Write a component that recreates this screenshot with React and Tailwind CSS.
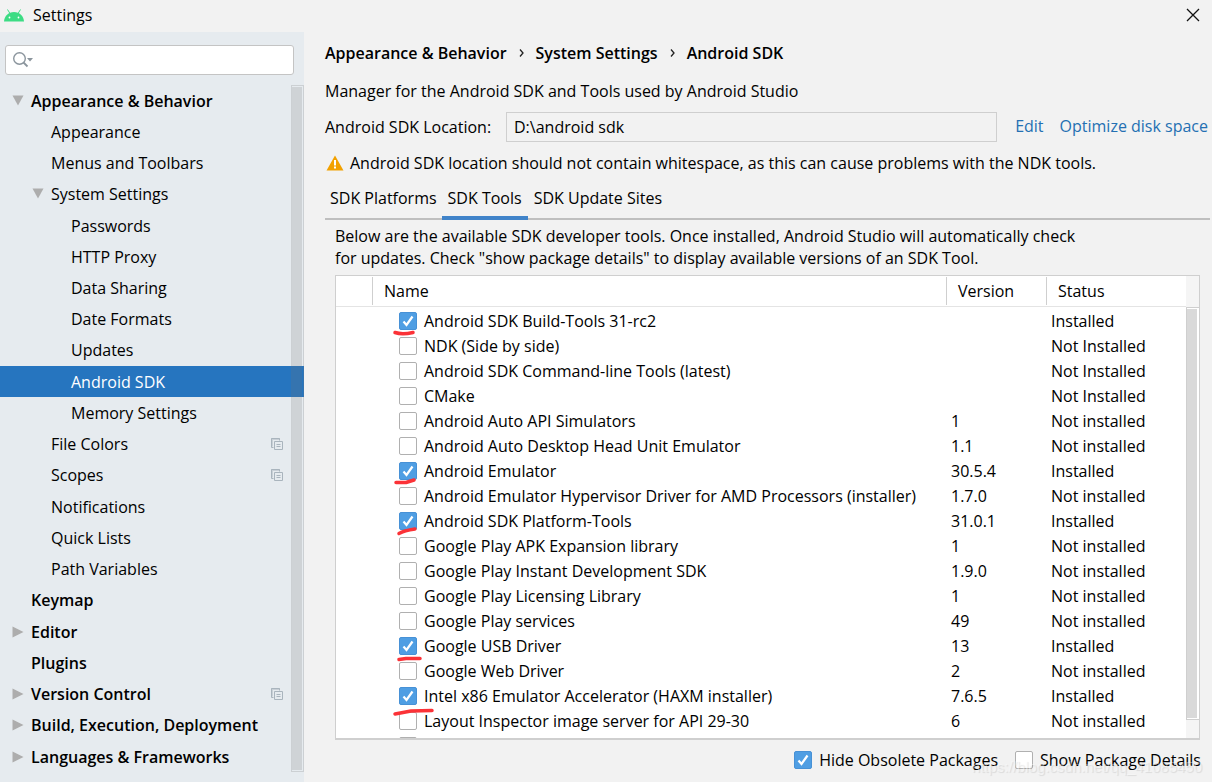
import React, { useState } from "react";

const menuItems = [
  { label: "Appearance & Behavior", level: 0, arrow: "down" },
  { label: "Appearance", level: 1 },
  { label: "Menus and Toolbars", level: 1 },
  { label: "System Settings", level: 1, arrow: "down" },
  { label: "Passwords", level: 2 },
  { label: "HTTP Proxy", level: 2 },
  { label: "Data Sharing", level: 2 },
  { label: "Date Formats", level: 2 },
  { label: "Updates", level: 2 },
  { label: "Android SDK", level: 2 },
  { label: "Memory Settings", level: 2 },
  { label: "File Colors", level: 1, project: true },
  { label: "Scopes", level: 1, project: true },
  { label: "Notifications", level: 1 },
  { label: "Quick Lists", level: 1 },
  { label: "Path Variables", level: 1 },
  { label: "Keymap", level: 0 },
  { label: "Editor", level: 0, arrow: "right" },
  { label: "Plugins", level: 0 },
  { label: "Version Control", level: 0, arrow: "right", project: true },
  { label: "Build, Execution, Deployment", level: 0, arrow: "right" },
  { label: "Languages & Frameworks", level: 0, arrow: "right" },
];

const tools = [
  { name: "Android SDK Build-Tools 31-rc2", version: "", status: "Installed" },
  { name: "NDK (Side by side)", version: "", status: "Not Installed" },
  { name: "Android SDK Command-line Tools (latest)", version: "", status: "Not Installed" },
  { name: "CMake", version: "", status: "Not Installed" },
  { name: "Android Auto API Simulators", version: "1", status: "Not installed" },
  { name: "Android Auto Desktop Head Unit Emulator", version: "1.1", status: "Not installed" },
  { name: "Android Emulator", version: "30.5.4", status: "Installed" },
  { name: "Android Emulator Hypervisor Driver for AMD Processors (installer)", version: "1.7.0", status: "Not installed" },
  { name: "Android SDK Platform-Tools", version: "31.0.1", status: "Installed" },
  { name: "Google Play APK Expansion library", version: "1", status: "Not installed" },
  { name: "Google Play Instant Development SDK", version: "1.9.0", status: "Not installed" },
  { name: "Google Play Licensing Library", version: "1", status: "Not installed" },
  { name: "Google Play services", version: "49", status: "Not installed" },
  { name: "Google USB Driver", version: "13", status: "Installed" },
  { name: "Google Web Driver", version: "2", status: "Not installed" },
  { name: "Intel x86 Emulator Accelerator (HAXM installer)", version: "7.6.5", status: "Installed" },
  { name: "Layout Inspector image server for API 29-30", version: "6", status: "Not installed" },
];

const indent = ["pl-3", "pl-8", "pl-[52px]"];

const AndroidIcon = () => (
  <svg className="w-5 h-[13px]" viewBox="0 0 20 13">
    <path d="M3.5 0.5L6 4.5M16.5 0.5L14 4.5" stroke="#3ddc84" strokeWidth="1" />
    <path d="M0 12.5C0.3 7 4.5 3 10 3s9.700 4 10 9.500z" fill="#3ddc84" />
    <circle cx="5.500" cy="8.500" r="0.900" fill="#fff" />
    <circle cx="14.500" cy="8.500" r="0.900" fill="#fff" />
  </svg>
);

const Arrow = ({ direction }) => (
  <svg className="w-3 h-3 shrink-0" viewBox="0 0 12 12" fill="#adadad">
    {direction === "down" && <path d="M0.500 0.500h11L6 10.500z" />}
    {direction === "right" && <path d="M0.500 0.500v11L11.500 6z" />}
  </svg>
);

const ProjectIcon = () => (
  <svg className="w-3 h-3 ml-auto mr-[9px] shrink-0" viewBox="0 0 12 12" fill="none" stroke="#a9b4bd">
    <path d="M2.500 9.500h-2v-9h8v2" />
    <path d="M0 1h9" />
    <path d="M1.500 1.500v7" stroke="#c9d1d7" />
    <path d="M3.500 3.500h8v8h-8z" fill="#e6ebef" />
    <path d="M5.500 6.500h4M5.500 8.500h4" />
  </svg>
);

const CheckBox = ({ label, checked, onChange }) => (
  <label className="inline-flex items-center gap-[7px]">
    <span className="relative flex w-[18px] h-[18px]">
      <input
        type="checkbox"
        checked={checked}
        onChange={onChange}
        className="appearance-none w-[18px] h-[18px] rounded-[2px] border border-[#b0b0b0] bg-white checked:bg-[#4f9ee3] checked:border-[#4791d6]"
      />
      {checked && (
        <svg className="absolute inset-0 pointer-events-none" viewBox="0 0 18 18" fill="none">
          <path d="M4.500 9.500l3 3.500L13.500 4.500" stroke="#fff" strokeWidth="2.200" />
        </svg>
      )}
    </span>
    <span>{label}</span>
  </label>
);

const RedMarks = () => (
  <svg
    className="absolute left-[53px] top-[50px] w-12 h-[400px] pointer-events-none"
    viewBox="0 0 48 400"
    fill="none"
    stroke="#fb3237"
    strokeWidth="3.500"
    strokeLinecap="round"
    strokeLinejoin="round"
  >
    <path d="M6 6.500Q13 9 24 6.500" />
    <path d="M7 156.500L17 156.500L25 154" />
    <path d="M10 207.500Q15 204.500 26 203" />
    <path d="M10 333.500L17 332.500L31 332.500" />
    <path d="M6 388L22 385L43 384.500" />
  </svg>
);

const Sidebar = () => {
  const [selected, setSelected] = useState("Android SDK");

  return (
    <aside className="w-[304px] shrink-0 flex flex-col bg-[#e6ebef] pt-[13px] pb-[10px]">
      <div className="relative ml-[5px] mr-[10px]">
        <svg className="absolute left-2 top-[7px]" width="21" height="16" viewBox="0 0 21 16" fill="none">
          <circle cx="6.500" cy="6.500" r="5.800" stroke="#8b959d" strokeWidth="1.400" />
          <path d="M10.500 10.500L14.500 14.500" stroke="#8b959d" strokeWidth="1.800" />
          <path d="M14 6h6l-3 3.500z" fill="#8b959d" />
        </svg>
        <input
          type="text"
          aria-label="Search settings"
          className="block w-full h-[30px] pl-9 rounded-[3px] border border-[#c4c4c4] bg-white outline-none"
        />
      </div>
      <nav className="relative flex-1 flex flex-col mt-[10px]">
        {menuItems.map((item) => (
          <button
            key={item.label}
            type="button"
            onClick={() => setSelected(item.label)}
            className={`flex-1 flex items-center gap-[7px] pr-3 text-left ${indent[item.level]} ${
              item.level === 0 ? "font-semibold" : ""
            } ${selected === item.label ? "bg-[#2675bf] text-white" : ""}`}
          >
            <Arrow direction={item.arrow} />
            <span className="whitespace-nowrap">{item.label}</span>
            {item.project && <ProjectIcon />}
          </button>
        ))}
        <div className="absolute right-0 inset-y-0 w-[13px] border border-[#73737338] p-px pl-0">
          <div className="h-full w-[10px] bg-[#73737333]"></div>
        </div>
      </nav>
    </aside>
  );
};

const ToolsTable = () => {
  const [checked, setChecked] = useState(
    tools.filter((tool) => tool.status === "Installed").map((tool) => tool.name)
  );

  const toggle = (name) => {
    setChecked((prev) =>
      prev.includes(name) ? prev.filter((n) => n !== name) : [...prev, name]
    );
  };

  return (
    <div className="relative flex-1 min-h-0 flex ml-[10px] mr-3 mt-[6px] border border-b-2 border-[#cfcfcf] bg-white overflow-hidden">
      <div className="flex-1 overflow-hidden">
        <table className="w-full table-fixed text-left">
          <colgroup>
            <col className="w-9" />
            <col />
            <col className="w-[100px]" />
            <col className="w-[140px]" />
          </colgroup>
          <thead>
            <tr className="h-[30px] border-b border-[#e4e4e4]">
              <th className="p-0"></th>
              {["Name", "Version", "Status"].map((title) => (
                <th key={title} className="p-0 font-normal">
                  <div className="h-7 leading-7 pl-[11px] border-l border-[#cfcfcf]">{title}</div>
                </th>
              ))}
            </tr>
          </thead>
          <tbody>
            <tr className="h-[2px]">
              <td colSpan={4} className="p-0"></td>
            </tr>
            {tools.map((tool) => (
              <tr key={tool.name} className="h-[25px] whitespace-nowrap">
                <td className="p-0"></td>
                <td className="p-0 pl-[27px]">
                  <div className="flex">
                    <CheckBox
                      label={tool.name}
                      checked={checked.includes(tool.name)}
                      onChange={() => toggle(tool.name)}
                    />
                  </div>
                </td>
                <td className="p-0 pl-[5px]">{tool.version}</td>
                <td className="p-0 pl-[5px]">{tool.status}</td>
              </tr>
            ))}
            <tr className="h-[25px]">
              <td className="p-0"></td>
              <td className="p-0 pl-[27px]">
                <div className="flex">
                  <CheckBox label="" checked={false} onChange={() => {}} />
                </div>
              </td>
              <td colSpan={2} className="p-0"></td>
            </tr>
          </tbody>
        </table>
      </div>
      <div className="w-[13px] shrink-0 pt-[31px] pb-[18px] bg-[#f5f5f5]">
        <div className="h-full border border-r-0 border-[#cfcfcf] bg-white p-px pl-0">
          <div className="h-full w-[10px] bg-[#d9d9d9]"></div>
        </div>
      </div>
      <RedMarks />
    </div>
  );
};

export default function App() {
  const [hideObsolete, setHideObsolete] = useState(true);
  const [showDetails, setShowDetails] = useState(false);

  return (
    <div className="relative h-screen flex flex-col overflow-hidden bg-[#f2f2f2] text-black text-[16px] leading-[22px] font-['Open_Sans','Noto_Sans',sans-serif]">
      <header className="h-8 shrink-0 flex items-center pl-1 pr-[11px] pb-[2px]">
        <AndroidIcon />
        <h1 className="ml-[9px]">Settings</h1>
        <button type="button" aria-label="Close" className="ml-auto p-px">
          <svg width="14" height="14" viewBox="0 0 14 14" stroke="#111" strokeWidth="1.300">
            <path d="M1 1l12 12M13 1L1 13" />
          </svg>
        </button>
      </header>

      <div className="flex-1 min-h-0 flex">
        <Sidebar />

        <main className="flex-1 min-w-0 flex flex-col pl-[21px] pt-[10px]">
          <div className="flex items-center font-semibold whitespace-nowrap">
            <span>Appearance &amp; Behavior</span>
            <svg className="mx-3 w-[5px] h-2" viewBox="0 0 5 8" fill="none" stroke="#222" strokeWidth="1.300">
              <path d="M1 0.500L4 4L1 7.500" />
            </svg>
            <span>System Settings</span>
            <svg className="mx-3 w-[5px] h-2" viewBox="0 0 5 8" fill="none" stroke="#222" strokeWidth="1.300">
              <path d="M1 0.500L4 4L1 7.500" />
            </svg>
            <span>Android SDK</span>
          </div>

          <p className="mt-4">Manager for the Android SDK and Tools used by Android Studio</p>

          <div className="flex items-center mt-[10px] pr-1 whitespace-nowrap">
            <label htmlFor="location" className="w-[181px]">
              Android SDK Location:
            </label>
            <input
              id="location"
              type="text"
              readOnly
              value="D:\android sdk"
              className="flex-1 min-w-0 h-[30px] px-[7px] border border-[#cfcfcf] bg-[#f2f2f2] outline-none"
            />
            <a href="#edit" className="ml-[18px] pb-[2px] text-[#2470b3]">Edit</a>
            <a href="#optimize" className="ml-4 pb-[2px] text-[#2470b3]">Optimize disk space</a>
          </div>

          <div className="flex items-center gap-[6px] mt-[10px] pl-px whitespace-nowrap">
            <svg className="w-[18px] h-4" viewBox="0 0 18 16">
              <path d="M9 0.500L17.500 15.500H0.500z" fill="#f2a100" />
              <path d="M8 5h2v5.500H8zM8 11.500h2v2H8z" fill="#fff" />
            </svg>
            <p>Android SDK location should not contain whitespace, as this can cause problems with the NDK tools.</p>
          </div>

          <div className="flex h-[44px] mt-[2px] mr-[2px] shrink-0 border-b-2 border-[#bfbfbf] whitespace-nowrap">
            <button type="button" className="px-[5px] pt-[2px]">SDK Platforms</button>
            <button type="button" className="px-[6px] pt-[2px] -mb-[2px] pb-[2px] shadow-[inset_0_-4px_0_#4083c9]">
              SDK Tools
            </button>
            <button type="button" className="px-[6px] pt-[2px]">SDK Update Sites</button>
          </div>

          <p className="mt-[5px] ml-[10px] max-w-[756px]">
            Below are the available SDK developer tools. Once installed, Android Studio will automatically check
            for updates. Check "show package details" to display available versions of an SDK Tool.
          </p>

          <ToolsTable />

          <footer className="h-[42px] shrink-0 flex items-center justify-end gap-[17px] pr-[11px] pb-[2px]">
            <CheckBox
              label="Hide Obsolete Packages"
              checked={hideObsolete}
              onChange={() => setHideObsolete(!hideObsolete)}
            />
            <CheckBox
              label="Show Package Details"
              checked={showDetails}
              onChange={() => setShowDetails(!showDetails)}
            />
          </footer>
        </main>
      </div>

      <div className="absolute right-[10px] bottom-1 text-[15px] text-white/40 [text-shadow:1px_1px_1px_#0000001a] font-['Liberation_Sans',sans-serif] pointer-events-none">
        https://blog.csdn.net/qq_41085450
      </div>
    </div>
  );
}
